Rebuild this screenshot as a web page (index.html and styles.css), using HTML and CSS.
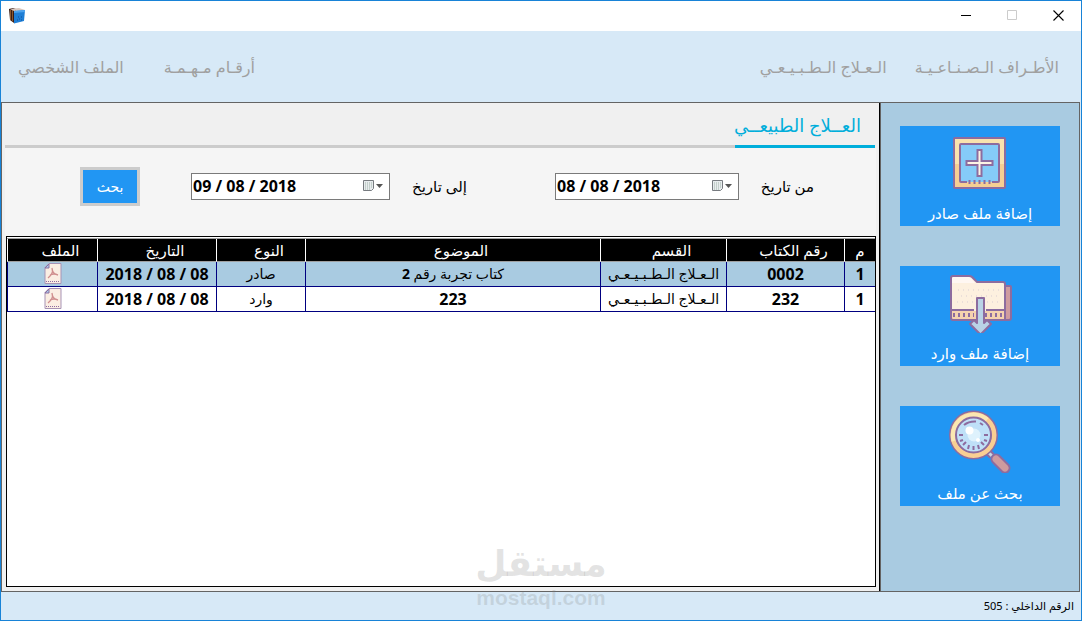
FILE: index.html
```html
<!doctype html>
<html lang="ar" dir="rtl">
<head>
  <meta charset="UTF-8">
  <meta name="viewport" content="width=device-width, initial-scale=1.0">
  <title>الأرشيف</title>
  <link rel="stylesheet" href="styles.css">
</head>
<body>
  <div class="window">
    <header class="titlebar">
      <div class="titlebar-controls">
        <button type="button" aria-label="إغلاق">
          <svg width="11" height="11" viewBox="0 0 11 11"><path d="M.5 .5l10 10M10.5 .5l-10 10" stroke="#000" stroke-width="1.1"/></svg>
        </button>
        <button type="button" aria-label="تكبير" disabled>
          <svg width="11" height="11" viewBox="0 0 11 11"><path d="M.5 .5h9v9h-9z" fill="none" stroke="#ccc"/></svg>
        </button>
        <button type="button" aria-label="تصغير">
          <svg width="11" height="11" viewBox="0 0 11 11"><path d="M0 5.5h10" stroke="#000"/></svg>
        </button>
      </div>
      <svg class="app-icon" width="16" height="16" viewBox="0 0 16 16">
        <path d="M0 1l4-1 3 1v14l-2 0-4-3z" fill="#3b1d14"/>
        <path d="M1.500 2v10M3.500 2v11" stroke="#8a5a30"/>
        <path d="M1 1l9-1 6 2-11 1z" fill="#d9c8c0"/>
        <path d="M5 3l11-1-1 11-10 2.500z" fill="#1f7fd6"/>
        <path d="M5 3l11-1v2l-11 1z" fill="#4ba3ee"/>
        <path d="M8 12h1M10 11h1M12 12h1M9 9h1M12 9h1" stroke="#0c4f99"/>
      </svg>
    </header>

    <nav class="menu">
      <a href="#prosthetics">الأطـراف الـصـنـاعـيـة</a>
      <a href="#therapy">الـعـلاج الـطـبـيـعـي</a>
      <a href="#numbers" class="menu-end">أرقـام مـهـمـة</a>
      <a href="#profile">الملف الشخصي</a>
    </nav>

    <div class="workspace">
      <aside class="sidebar">
        <button type="button" class="tile">
          <svg width="64" height="64" viewBox="0 -2 64 64">
            <rect x="6" y="7" width="51" height="50" rx="1" fill="#f9e3ae"/>
            <path d="M7 33h49v24h-49z" fill="#f6cf93"/>
            <rect x="6" y="7" width="51" height="50" rx="1" fill="none" stroke="#8d6c9f" stroke-width="2"/>
            <rect x="12" y="13" width="39" height="38" rx="1" fill="#85cbf8" stroke="#8d6c9f" stroke-width="2"/>
            <path d="M19 51h25" stroke="#f6cf93" stroke-width="3"/>
            <path d="M19 50h25" stroke="#85cbf8" stroke-width="2"/>
            <path d="M21.500 49v4M26.500 49v4M31.500 49v4M36.500 49v4M41.500 49v4" stroke="#8d6c9f" stroke-width="2"/>
            <path d="M29.500 19h4v11h11v4h-11v11h-4v-11h-11v-4h11z" fill="#fdf3e4" stroke="#8d6c9f" stroke-width="2"/>
          </svg>
          <span>إضافة ملف صادر</span>
        </button>
        <button type="button" class="tile">
          <svg width="64" height="64" viewBox="0 0 64 64">
            <path d="M57 17h5q1 0 1 1v31q0 2-2 2h-5z" fill="#cf9b9f" stroke="#8d6c9f" stroke-width="2"/>
            <path d="M3 50v-41q0-2 2-2h16q2 0 3 1l5 5h26q2 0 2 2v35z" fill="#fdf0df"/>
            <path d="M4 14v-6h18l5 6z" fill="#fff7f2"/>
            <path d="M4 42h52v9h-52z" fill="#f5d2ae"/>
            <path d="M3 49v-40q0-2 2-2h16q2 0 3 1l5 5h26q2 0 2 2v36h-52q-2 0-2-2z" fill="none" stroke="#8d6c9f" stroke-width="2"/>
            <path d="M10 21h42M13 27h38M9 33h16M39 33h12" stroke="#d9cdd3" stroke-dasharray="1 4"/>
            <path d="M4 41h22M38 41h18" stroke="#8d6c9f" stroke-width="2"/>
            <path d="M5 46h21M37 46h17" stroke="#8d6c9f" stroke-width="4" stroke-dasharray="2 3"/>
            <path d="M28 41h9v9h-9z" fill="#f5d2ae"/>
            <path d="M29 29h7v25l3-3 4 4-10.500 10.500-10.500-10.500 4-4 3 3z" fill="#b9d3e6" stroke="#8d6c9f" stroke-width="2" stroke-linejoin="round"/>
          </svg>
          <span>إضافة ملف وارد</span>
        </button>
        <button type="button" class="tile">
          <svg width="64" height="64" viewBox="0 0 64 64">
            <path d="M39 42l5 5" stroke="#8d6c9f" stroke-width="7"/>
            <path d="M41 44l3 3" stroke="#c8d8e4" stroke-width="3"/>
            <path d="M48 50l9 9" stroke="#8d6c9f" stroke-width="11" stroke-linecap="round"/>
            <path d="M48 50l9 9" stroke="#cf9b9f" stroke-width="7" stroke-linecap="round"/>
            <circle cx="25.500" cy="26" r="21" fill="#bfe0f8" stroke="#8d6c9f" stroke-width="7"/>
            <circle cx="25.500" cy="26" r="20.500" fill="none" stroke="#f9cf93" stroke-width="5"/>
            <path d="M6 32a20.500 20.500 0 0 1 33-21" fill="none" stroke="#fbe7b2" stroke-width="5"/>
            <circle cx="25.500" cy="26" r="17.500" fill="#bfe0f8" stroke="#8d6c9f" stroke-width="2"/>
            <path d="M16 16q5-4 12-3.500M32 14l3 2" fill="none" stroke="#8d6c9f" stroke-width="2"/>
            <path d="M11 26h4M36 26h4M12 32l3-1M39 32l-3-1M15 36l3-3M36 36l-3-3M20 40l1-4M25.500 41v-4M31 40l-1-4" stroke="#8d6c9f" stroke-width="2"/>
            <circle cx="26" cy="26" r="6.500" fill="#def2fd"/>
            <circle cx="21.500" cy="21.500" r="4" fill="#fff"/>
            <circle cx="30" cy="31" r="2" fill="#fff"/>
          </svg>
          <span>بحث عن ملف</span>
        </button>
      </aside>

      <main class="content">
        <div class="tabs">
          <h1 class="tab">العــلاج الطبيعــي</h1>
        </div>

        <form class="filters">
          <label for="from">من تاريخ</label>
          <div class="date">
            <input id="from" type="text" value="08 / 08 / 2018">
            <svg width="22" height="16" viewBox="0 0 22 16">
              <path d="M1.500 2.500h10v8l-2 2h-8z" fill="#e8ecee" stroke="#777b80"/>
              <path d="M3 5h7M3 7h7M3 9h7M3 11h5" stroke="#9fb3a8" stroke-dasharray="1 1"/>
              <path d="M14 6h7l-3.500 4z" fill="#555"/>
            </svg>
          </div>
          <label for="to" class="label-to">إلى تاريخ</label>
          <div class="date date-wide">
            <input id="to" type="text" value="09 / 08 / 2018">
            <svg width="22" height="16" viewBox="0 0 22 16">
              <path d="M1.500 2.500h10v8l-2 2h-8z" fill="#e8ecee" stroke="#777b80"/>
              <path d="M3 5h7M3 7h7M3 9h7M3 11h5" stroke="#9fb3a8" stroke-dasharray="1 1"/>
              <path d="M14 6h7l-3.500 4z" fill="#555"/>
            </svg>
          </div>
          <button type="button" class="search">بحث</button>
        </form>

        <div class="grid">
          <table>
            <colgroup>
              <col class="col-index"><col class="col-number"><col class="col-section"><col><col class="col-type"><col class="col-date"><col class="col-file">
            </colgroup>
            <thead>
              <tr>
                <th class="index">م</th>
                <th>رقم الكتاب</th>
                <th>القسم</th>
                <th>الموضوع</th>
                <th>النوع</th>
                <th>التاريخ</th>
                <th>الملف</th>
              </tr>
            </thead>
            <tbody>
              <tr class="selected">
                <td>1</td>
                <td>0002</td>
                <td class="text">الـعـلاج الـطـبـيـعـي</td>
                <td class="text">كتاب تجربة رقم <b>2</b></td>
                <td class="text">صادر</td>
                <td><bdo dir="ltr">2018 / 08 / 08</bdo></td>
                <td>
                  <svg width="18" height="22" viewBox="0 0 18 22">
                    <path d="M5 .5h12v20h-16v-16z" fill="#fbeee3" stroke="#a793b5"/>
                    <path d="M1 5l4-4v4z" fill="#a8d0f0" stroke="#8d6c9f"/>
                    <path d="M8 5q2 5-4 10M8 5q0 6 6 7M6 12q4-2 8 0" fill="none" stroke="#d08f8f" stroke-width="1.3"/>
                    <path d="M2 18.500h14" stroke="#8d6c9f" stroke-dasharray="1 1"/>
                  </svg>
                </td>
              </tr>
              <tr>
                <td>1</td>
                <td>232</td>
                <td class="text">الـعـلاج الـطـبـيـعـي</td>
                <td>223</td>
                <td class="text">وارد</td>
                <td><bdo dir="ltr">2018 / 08 / 08</bdo></td>
                <td>
                  <svg width="18" height="22" viewBox="0 0 18 22">
                    <path d="M5 .5h12v20h-16v-16z" fill="#fbeee3" stroke="#a793b5"/>
                    <path d="M1 5l4-4v4z" fill="#a8d0f0" stroke="#8d6c9f"/>
                    <path d="M8 5q2 5-4 10M8 5q0 6 6 7M6 12q4-2 8 0" fill="none" stroke="#d08f8f" stroke-width="1.3"/>
                    <path d="M2 18.500h14" stroke="#8d6c9f" stroke-dasharray="1 1"/>
                  </svg>
                </td>
              </tr>
            </tbody>
          </table>
        </div>
      </main>
    </div>

    <footer class="status">الرقم الداخلي : 505</footer>

    <div class="watermark">
      <span class="watermark-name">مستقل</span>
      <span class="watermark-url">mostaql.com</span>
    </div>
  </div>
</body>
</html>
```
FILE: styles.css
```css
:root {
  --frame: #1883d7;
  --light: #d7e9f7;
  --panel: #a9cbe1;
  --blue: #2196f3;
  --cyan: #00aedb;
  --gray-line: #646464;
}

* {
  box-sizing: border-box;
}

body {
  margin: 0;
  font-family: "Noto Sans", "DejaVu Sans", sans-serif;
  font-size: 15px;
  color: #000;
}

button {
  font-family: inherit;
  border: none;
  padding: 0;
}

svg {
  display: block;
}

.window {
  position: relative;
  display: flex;
  flex-direction: column;
  min-height: 100vh;
  border: 1px solid var(--frame);
  background-color: var(--light);
}

/* title bar */
.titlebar {
  display: flex;
  justify-content: space-between;
  align-items: center;
  height: 30px;
  background-color: #fff;
}

.titlebar-controls {
  display: flex;
}

.titlebar-controls button {
  display: flex;
  align-items: center;
  justify-content: center;
  width: 46px;
  height: 30px;
  padding-bottom: 2px;
  background: none;
}

.app-icon {
  margin-left: 8px;
}

/* top menu */
.menu {
  display: flex;
  align-items: center;
  height: 71px;
  padding: 0 22px 0 17px;
  font-size: 16px;
}

.menu a {
  color: #a0a0a0;
  text-decoration: none;
  margin-left: 28px;
}

.menu .menu-end {
  margin-right: auto;
  margin-left: 40px;
}

.menu a:last-child {
  margin-left: 0;
}

/* workspace */
.workspace {
  display: flex;
  flex: 1;
  margin-right: 1px;
  border: 1px solid var(--gray-line);
}

.sidebar {
  display: flex;
  flex-direction: column;
  align-items: center;
  gap: 40px;
  width: 199px;
  padding-top: 23px;
  background-color: var(--panel);
  border-left: 1px solid var(--gray-line);
}

.tile {
  display: flex;
  flex-direction: column;
  align-items: center;
  justify-content: space-between;
  width: 160px;
  height: 100px;
  padding: 3px 0;
  background-color: var(--blue);
  color: #fff;
  font-size: 15px;
}

.content {
  display: flex;
  flex: 1;
  flex-direction: column;
  padding: 0 3px 4px;
  background-color: #f0f0f0;
  border-right: 1px solid #000;
}

.tabs {
  margin-right: 1px;
  height: 45px;
  border-bottom: 3px solid #ccc;
}

.tab {
  width: 140px;
  height: 45px;
  margin: 0;
  padding-right: 14px;
  border-bottom: 3px solid var(--cyan);
  color: var(--cyan);
  font-size: 18px;
  font-weight: normal;
  line-height: 45px;
  white-space: nowrap;
}

.filters {
  display: flex;
  align-items: center;
  height: 88px;
  padding: 0 62px 12px 0;
  background-color: #f5f5f5;
  white-space: nowrap;
}

.filters label {
  width: 75px;
}

.filters .label-to {
  width: 77px;
  margin-right: 88px;
}

.date {
  display: flex;
  align-items: center;
  direction: ltr;
  width: 184px;
  height: 27px;
  padding-right: 5px;
  background-color: #fff;
  border: 1px solid #7a7a7a;
}

.date-wide {
  width: 199px;
}

.date input {
  flex: 1;
  min-width: 0;
  padding: 0 1px;
  border: none;
  background: none;
  font-family: inherit;
  font-size: 16px;
  font-weight: bold;
}

.search {
  width: 60px;
  height: 39px;
  margin-right: 51px;
  background-color: var(--blue);
  border: 3px solid #ccc;
  color: #fff;
  font-size: 14px;
}

/* records */
.grid {
  flex: 1;
  margin-left: 1px;
  background-color: #fff;
  border: 1px solid #000;
}

table {
  width: 100%;
  margin-top: 1px;
  table-layout: fixed;
  border-spacing: 0;
  border-top: 1px solid #a0a0a0;
  white-space: nowrap;
}

.col-index {
  width: 31px;
}

.col-number {
  width: 118px;
}

.col-section {
  width: 126px;
}

.col-type {
  width: 89px;
}

.col-date {
  width: 119px;
}

.col-file {
  width: 90px;
}

th {
  height: 23px;
  padding: 0 0 0 16px;
  background-color: #000;
  border-left: 1px solid #fff;
  border-bottom: 1px solid #a0a0a0;
  color: #fff;
  font-size: 15px;
  font-weight: normal;
  line-height: 22px;
}

th.index {
  padding: 0;
}

td {
  height: 25px;
  padding: 0;
  border-left: 1px solid navy;
  border-bottom: 1px solid navy;
  font-size: 16px;
  font-weight: bold;
  line-height: 24px;
  text-align: center;
}

td.text {
  font-size: 14px;
  font-weight: normal;
}

td svg {
  margin: 0 auto;
}

.selected td {
  background-color: var(--panel);
}

.status {
  height: 28px;
  padding-right: 7px;
  font-size: 11px;
  line-height: 28px;
}

/* site mark over the window */
.watermark {
  position: absolute;
  bottom: 10px;
  left: 50%;
  transform: translateX(-50%);
  display: flex;
  flex-direction: column;
  align-items: center;
  color: rgba(128, 128, 128, 0.22);
  font-weight: bold;
  pointer-events: none;
}

.watermark-name {
  font-family: "DejaVu Sans", sans-serif;
  font-size: 36px;
  line-height: 44px;
}

.watermark-url {
  font-family: "Liberation Sans", sans-serif;
  font-size: 21px;
  line-height: 24px;
}
```
